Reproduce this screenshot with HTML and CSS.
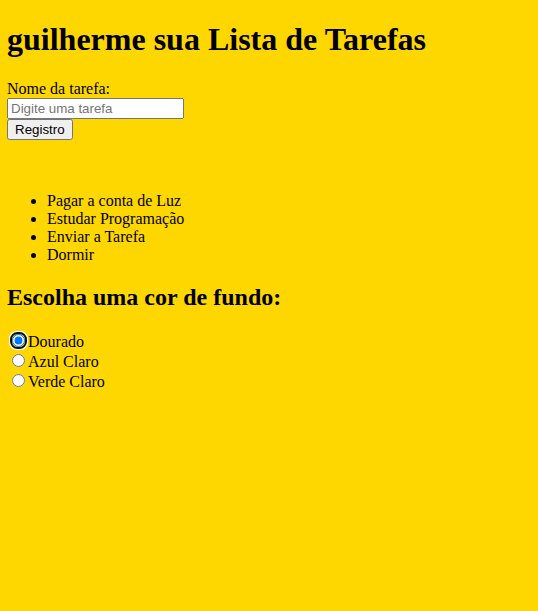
FILE: index.html
```html
<!DOCTYPE html>
<html lang="pt-BR">
<head>
<meta charset="utf-8">
<title>Lista de Tarefas</title>
<link rel="stylesheet" href="styles.css">
</head>
<body class="page">
<h1 class="title">guilherme sua Lista de Tarefas</h1>
<form class="task-form">
<label for="tarefa" class="label">Nome da tarefa:</label><br>
<input type="text" id="tarefa" class="field" placeholder="Digite uma tarefa"><br>
<button type="button" class="btn">Registro</button>
<br><br><br>
</form>
<ul class="tasks">
<li>Pagar a conta de Luz</li>
<li>Estudar Programação</li>
<li>Enviar a Tarefa</li>
<li>Dormir</li>
</ul>
<h2 class="subtitle">Escolha uma cor de fundo:</h2>
<div class="colors">
<input type="radio" name="cor" id="dourado" class="radio radio-focus" checked><label for="dourado">Dourado</label><br>
<input type="radio" name="cor" id="azul" class="radio"><label for="azul">Azul Claro</label><br>
<input type="radio" name="cor" id="verde" class="radio"><label for="verde">Verde Claro</label>
</div>
</body>
</html>
```
FILE: styles.css
```css
html {
  background: #ffd700;
}
.page {
  margin: 0 8px 8px 7px;
  background: #ffd700;
  font-family: "Liberation Serif", "Times New Roman", serif;
  font-size: 16px;
  color: #000;
}
.title {
  font-size: 32px;
  margin: 21.44px 0;
}
.task-form {
  margin: 0;
}
.field {
  font-family: "Liberation Sans", Arial, sans-serif;
  font-size: 13.333px;
  box-sizing: border-box;
  width: 177px;
  height: 21px;
}
.btn {
  font-family: "Liberation Sans", Arial, sans-serif;
  font-size: 13.333px;
}
.tasks {
  margin: 16px 0;
  padding-left: 40px;
}
.subtitle {
  font-size: 24px;
  margin: 19.92px 0;
}
.radio {
  margin: 3px 3px 0 5px;
}
.radio-focus {
  outline: #101010 auto 2px;
  outline-offset: 1px;
}
```
